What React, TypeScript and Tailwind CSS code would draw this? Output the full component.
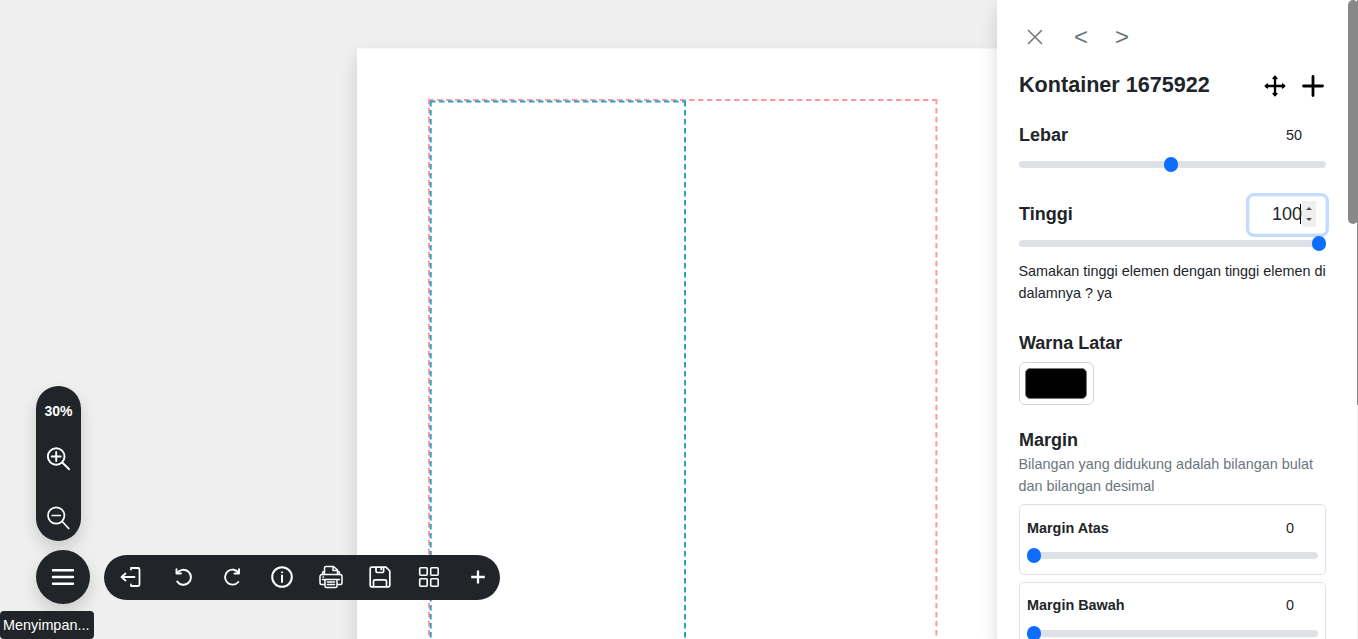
import React from "react";

function Icon({ size, className = "", children, vb = 24, sw = 1.6 }: { size: number; className?: string; children: React.ReactNode; vb?: number; sw?: number }) {
  return (
    <svg width={size} height={size} viewBox={`0 0 ${vb} ${vb}`} fill="none" stroke="currentColor" strokeWidth={sw} strokeLinecap="round" strokeLinejoin="round" className={`shrink-0 ${className}`}>
      {children}
    </svg>
  );
}

function Slider({ pos }: { pos: number }) {
  return (
    <div className="flex h-[15px] items-center rounded-full">
      <div className="relative h-[7px] w-full rounded-full bg-[#dee2e6]">
        <div className="absolute -top-1 h-[15px] w-[14px] rounded-full bg-[#0d6efd]" style={{ left: `calc((100% - 14px) * ${pos})` }} />
      </div>
    </div>
  );
}

function MarginCard({ label, className }: { label: string; className: string }) {
  return (
    <div className={`flex h-[71px] shrink-0 flex-col rounded-[5px] border border-[#dee2e6] px-[7px] ${className}`}>
      <div className="flex h-[22px] items-center justify-between pr-6 text-[14.4px]">
        <span className="font-bold">{label}</span>
        <span>0</span>
      </div>
      <Slider pos={0} />
    </div>
  );
}

function Canvas() {
  return (
    <main className="h-full w-[997px] shrink-0 overflow-hidden bg-[#efefef] pl-[357px] pt-[48px]">
      <div className="h-[800px] w-[700px] border-t border-[#f7f7f7] bg-white pl-[71px] pt-[50px] shadow-[0_8px_16px_rgba(0,0,0,0.15)]">
        <svg width="512" height="600" fill="none" strokeWidth="2" strokeDasharray="5.5 3.5">
          <path d="M0 1H509" stroke="#fb9b9b" />
          <path d="M1 0V600M508.400 0V600" stroke="#fb9b9b" />
          <path d="M2 2.600H258" stroke="#2f9fc7" />
          <path d="M2.700 2V600M257 2V600" stroke="#2f9fc7" />
        </svg>
      </div>
    </main>
  );
}

function Toolbar() {
  return (
    <nav className="absolute left-[104px] top-[555px] flex h-[45px] w-[396px] items-center rounded-full bg-[#212529] pl-[6px] text-white">
      <div className="grid h-[43px] w-[392px] shrink-0 -translate-y-px grid-cols-8 place-items-center">
        <Icon size={22} vb={22} sw={1.8} className="mr-[7px]">
          <path d="M11 2h7a1.500 1.500 0 0 1 1.500 1.500v15A1.500 1.500 0 0 1 18 20h-7M11 2v1.500M11 20v-1.500M1.500 11h13M5.500 7.500L1.500 11l4 3.500" />
        </Icon>
        <Icon size={18} vb={18} sw={1.9} className="ml-px">
          <path d="M1.500 1.200v4.300H6M1.700 5.300h.4A7.500 7.500 0 1 1 2.300 13.600" />
        </Icon>
        <Icon size={18} vb={18} sw={1.9}>
          <path d="M15 1.200v4.300H10.500M14.800 5A7.500 7.500 0 1 0 14.300 14" />
        </Icon>
        <Icon size={22} vb={22} sw={2}>
          <circle cx="11" cy="11" r="9.800" />
          <path d="M11 9.500v6.500" />
          <circle cx="11" cy="6.300" r=".6" fill="currentColor" strokeWidth="1" />
        </Icon>
        <Icon size={24} vb={24} sw={1.5}>
          <path d="M5.500 9.500V3A1.500 1.500 0 0 1 7 1.500h7.500L18.500 5v4.500M14 1.500V5.500h4.500M5.500 6.500H5A1.500 1.500 0 0 0 3.500 8v1.500M18.500 6.500H19A1.500 1.500 0 0 1 20.500 8v1.500" />
          <path d="M5.500 19.500H2.500a1.500 1.500 0 0 1-1.500-1.500v-6.500a2 2 0 0 1 2-2h18a2 2 0 0 1 2 2V18a1.500 1.500 0 0 1-1.500 1.500h-3M6 14.500h12V21a1.500 1.500 0 0 1-1.500 1.500h-9A1.500 1.500 0 0 1 6 21zM4 12h.5M8.500 17h7M8.500 19.500h7M3.500 14.500h17" />
        </Icon>
        <Icon size={22} vb={22} sw={1.700}>
          <path d="M2.500 1.200h14.500L20.800 5v14.500a1.300 1.300 0 0 1-1.300 1.300h-17a1.300 1.300 0 0 1-1.300-1.300v-17a1.300 1.300 0 0 1 1.300-1.300zM7 1.200v4A1.300 1.300 0 0 0 8.300 6.500h5A1.300 1.300 0 0 0 14.600 5.200v-4M12.200 2v1.500M4.500 20.800v-5.500A1.500 1.500 0 0 1 6 13.800h10a1.500 1.500 0 0 1 1.500 1.500v5.500" />
        </Icon>
        <Icon size={22} vb={22} sw={1.6}>
          <rect x="1.700" y="1.700" width="7.500" height="7.500" rx="1" />
          <rect x="12.700" y="1.700" width="7.500" height="7.500" rx="1" />
          <rect x="1.700" y="12.700" width="7.500" height="7.500" rx="1" />
          <rect x="12.700" y="12.700" width="7.500" height="7.500" rx="1" />
        </Icon>
        <Icon size={14} vb={14} sw={2.3}>
          <path d="M7 .5v13M.200 7h13.600" strokeLinecap="butt" />
        </Icon>
      </div>
    </nav>
  );
}

function Panel() {
  return (
    <aside className="relative flex h-full w-[361px] shrink-0 flex-col bg-white pl-[22px] pr-[32px] text-[#212529] shadow-[0_8px_16px_rgba(0,0,0,0.15)]">
      <div className="mt-[22px] flex h-[30px] shrink-0 items-center pl-2 text-[#6c757d]">
        <Icon size={16} vb={16} sw={1.6} className="text-[#777]">
          <path d="M1.500 1.500l13 13M14.500 1.500l-13 13" />
        </Icon>
        <span className="ml-[31px] w-[14px] text-[24px] leading-[30px]">&lt;</span>
        <span className="ml-[27px] w-[14px] text-[24px] leading-[30px]">&gt;</span>
      </div>
      <div className="mt-[18px] flex h-[32px] shrink-0 items-center">
        <h1 className="grow pb-px text-[21.600px] font-bold">Kontainer 1675922</h1>
        <Icon size={22} vb={22} sw={2.3} className="text-black">
          <path d="M11 2v18M2 11h18" />
          <path d="M11 1.200L9 3.500h4zM11 20.800L9 18.500h4zM1.200 11L3.500 9v4zM20.800 11L18.500 9v4z" fill="currentColor" strokeWidth="1.300" />
        </Icon>
        <Icon size={22} vb={22} sw={2.8} className="ml-4 mr-[2px] text-black">
          <path d="M11 1.500v19M1.500 11h19" />
        </Icon>
      </div>
      <div className="mt-[19px] flex h-[28px] shrink-0 items-center justify-between pr-6">
        <h2 className="text-[18px] font-bold">Lebar</h2>
        <span className="pt-[2px] text-[14.4px]">50</span>
      </div>
      <div className="mt-[8px]"><Slider pos={0.495} /></div>
      <div className="mt-[21px] flex h-[44px] shrink-0 items-center justify-between">
        <h2 className="pb-[2px] text-[18px] font-bold">Tinggi</h2>
        <div className="-mr-[3px] flex h-[44px] w-[83px] items-center justify-end rounded-[8px] border-[3px] border-[#c2dbfe] bg-white pb-[2px] pr-[10px] ring-1 ring-inset ring-[#c2dbfe]/40">
          <span className="h-[20px] border-r border-black text-[18px] leading-[20px]"><span className="-mr-[2px]">100</span></span>
          <span className="ml-[1px] flex h-[26px] w-[14px] flex-col items-center justify-between bg-[#efefef] py-[6px]">
            <svg width="6" height="3"><path d="M0 3L3 0l3 3z" fill="#505050" /></svg>
            <svg width="6" height="3"><path d="M0 0l3 3 3-3z" fill="#505050" /></svg>
          </span>
        </div>
      </div>
      <div className="-mt-px"><Slider pos={1} /></div>
      <p className="-ml-[0.500px] -mr-2 mt-[9px] text-[14.4px] leading-[22px]">Samakan tinggi elemen dengan tinggi elemen di<br />dalamnya ? ya</p>
      <h2 className="mt-[26px] text-[18px] font-bold leading-[27px]">Warna Latar</h2>
      <div className="mt-[5px] h-[43px] w-[75px] shrink-0 rounded-[6px] border border-[#ced4da] py-[5px] pl-[5px] pr-[6px]">
        <div className="h-full rounded-[5px] border border-[#777] bg-black" />
      </div>
      <h2 className="mt-[22px] text-[18px] font-bold leading-[27px]">Margin</h2>
      <p className="-ml-[0.500px] -mr-2 -mt-px text-[14.4px] leading-[22px] text-[#6c757d]">Bilangan yang didukung adalah bilangan bulat<br />dan bilangan desimal</p>
      <div className="mt-[7px] flex flex-col gap-[7px]">
        <MarginCard label="Margin Atas" className="gap-2 pt-[13px]" />
        <MarginCard label="Margin Bawah" className="gap-[9px] pt-3" />
      </div>
      <div className="absolute right-0 top-0 h-[405px] w-px bg-[#888]" />
      <div className="absolute right-0 top-[405px] h-[234px] w-px bg-[#f1f1f1]" />
      <div className="absolute right-0 top-0 h-[224px] w-[10px] rounded-[5px] bg-[#888]" />
    </aside>
  );
}

export default function App() {
  return (
    <div className="relative flex h-[639px] w-[1358px] overflow-hidden bg-[#efefef] font-['Liberation_Sans',Arial,sans-serif]">
      <Canvas />
      <Panel />
      <div className="absolute left-[36px] top-[386px] flex h-[155px] w-[45px] flex-col items-center rounded-full bg-[#212529] text-white shadow-[0_8px_16px_rgba(0,0,0,0.15)]">
        <span className="mt-[17px] text-[14px] font-bold leading-4">30%</span>
        <Icon size={24} vb={24} sw={1.9} className="mt-[28px]">
          <circle cx="9.200" cy="9.500" r="8.300" />
          <path d="M15.200 15.500L22.200 22.200M9.200 5v9M4.700 9.500h9" />
        </Icon>
        <Icon size={24} vb={24} sw={1.7} className="mt-[35px]">
          <circle cx="9.200" cy="9.500" r="8.200" />
          <path d="M15.200 15.500L21.700 22.500M5.200 9.500h8" />
        </Icon>
      </div>
      <button className="absolute left-[36px] top-[550px] grid size-[54px] place-items-center rounded-full bg-[#212529] text-white shadow-[0_8px_16px_rgba(0,0,0,0.15)]">
        <Icon size={24} vb={24} sw={2.4}>
          <path d="M2 5.300h20M2 12h20M2 18.700h20" />
        </Icon>
      </button>
      <Toolbar />
      <div className="absolute left-0 top-[611px] flex h-[28px] w-[94px] items-center whitespace-nowrap rounded-[4px] bg-[#212529] pl-[3px] pt-[2px] text-[14.4px] text-white">Menyimpan...</div>
    </div>
  );
}
